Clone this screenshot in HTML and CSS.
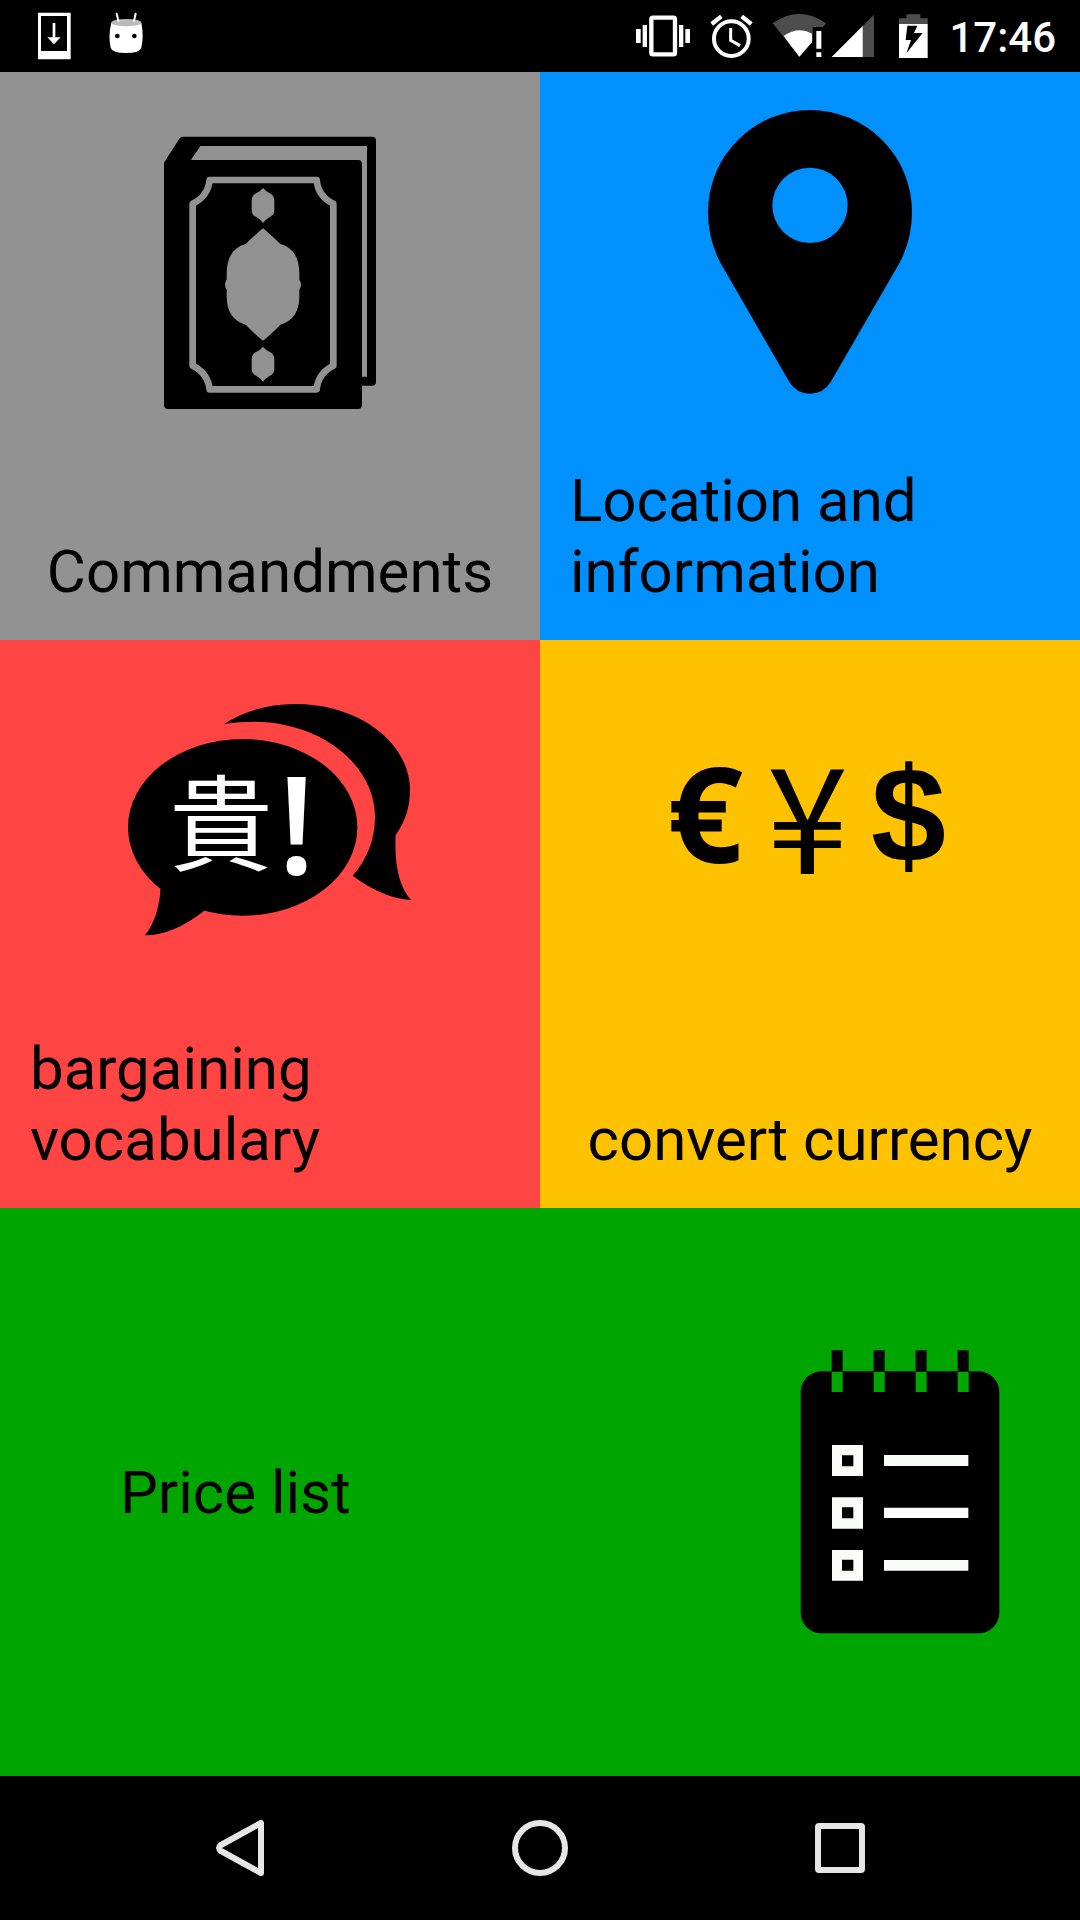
FILE: index.html
```html
<!DOCTYPE html>
<html lang="en">
<head>
    <meta charset="UTF-8">
    <meta name="viewport" content="width=device-width, initial-scale=1.0">
    <title>Main menu</title>
    <link rel="stylesheet" href="styles.css">
</head>
<body>
    <header class="status-bar">
        <div class="status-group">
            <!-- download -->
            <svg class="status-icon" viewBox="90 0 144 216">
                <path fill="#fff" fill-rule="evenodd" d="M114 38H212V178H114ZM123 48V153H201V48Z"/>
                <path fill="#fff" d="M158 69H166V112H182L162 133L142 112H158Z"/>
            </svg>
            <!-- android -->
            <svg class="status-icon" viewBox="306 0 144 216">
                <path fill="#fff" d="M334 68Q378 78 424 68Q432 110 424 143Q420 159 378 159Q337 159 332 143Q324 110 334 68Z"/>
                <ellipse cx="379" cy="68" rx="45" ry="11" fill="#bbb"/>
                <path stroke="#fff" stroke-width="6" stroke-linecap="round" d="M350 41L355 62M407 41L402 62"/>
                <circle cx="352" cy="108" r="7"/>
                <circle cx="403" cy="108" r="7"/>
            </svg>
        </div>
        <div class="status-group">
            <!-- vibrate -->
            <svg class="status-icon" viewBox="72 0 180 216">
                <rect x="124" y="53" width="71" height="110" rx="5" fill="none" stroke="#fff" stroke-width="13"/>
                <path fill="#fff" d="M78 87H92V129H78ZM98 75H111V141H98ZM207 75H220V141H207ZM226 87H240V129H226Z"/>
            </svg>
            <!-- alarm -->
            <svg class="status-icon" viewBox="294 0 144 216">
                <circle cx="364" cy="116" r="52" fill="none" stroke="#fff" stroke-width="12"/>
                <path fill="none" stroke="#fff" stroke-width="9" d="M362 84V121L390 137"/>
                <path fill="none" stroke="#fff" stroke-width="13" d="M305 72L334 49M424 72L395 49"/>
            </svg>
            <!-- wifi and signal -->
            <svg class="status-icon" viewBox="480 0 318 216">
                <path fill="#4d4d4d" d="M488 70Q568 14 648 70L639 81H608V122L568 170Z"/>
                <path fill="#fff" d="M521 108Q564 78 606 101V127L568 170Z"/>
                <path fill="#fff" d="M619 93H634V146H619ZM619 157H634V171H619Z"/>
                <path fill="#4d4d4d" d="M792 44V171H665Z"/>
                <path fill="#fff" d="M758 78V171H665Z"/>
            </svg>
            <!-- battery -->
            <svg class="status-icon" viewBox="840 0 135 216">
                <path fill="#4d4d4d" d="M889 43H931V55H953V73H867V55H889Z"/>
                <path fill="#fff" d="M867 72H953V174H867Z"/>
                <path d="M892 77H922L912 99H938L889 160L903 120H887Z"/>
            </svg>
            <span class="clock">17:46</span>
        </div>
    </header>

    <main class="menu">
        <button class="tile tile-commandments">
            <svg class="tile-icon" viewBox="-90 -84 960 960">
                <path fill-rule="evenodd" d="M72 128L118 56Q122 50 130 50H696Q708 50 708 62V785Q708 797 696 797H666V855Q666 867 654 867H84Q72 867 72 855ZM181 78L153 120H654Q666 120 666 132V770H681V78Z"/>
                <path class="cut-line" d="M209 180H530Q534 229 580 251V737Q534 760 530 808H209Q204 760 158 737V251Q204 229 209 180Z"/>
                <path class="cut" d="M369 204Q377 214 388 219Q403 226 403 242V271Q403 286 388 292Q377 299 369 309Q361 299 350 292Q335 286 335 271V242Q335 226 350 219Q361 214 369 204Z"/>
                <path class="cut" d="M369 325Q390 342 421 372Q478 387 478 462V479Q488 493 478 509V528Q478 598 421 614Q390 646 369 662Q348 646 317 614Q260 598 260 528V509Q250 493 260 479V462Q260 387 317 372Q348 342 369 325Z"/>
                <path class="cut" d="M369 680Q377 690 388 695Q403 702 403 718V747Q403 762 388 768Q377 775 369 785Q361 775 350 768Q335 762 335 747V718Q335 702 350 695Q361 690 369 680Z"/>
            </svg>
            <span class="tile-label">Commandments</span>
        </button>

        <button class="tile tile-location">
            <svg class="tile-icon" viewBox="-90 6 960 960">
                <path fill-rule="evenodd" d="M390 60A306 306 0 0 1 696 366Q696 448 658 520L452 876Q430 911 390 911Q350 911 328 876L122 520Q84 448 84 366A306 306 0 0 1 390 60ZM390 233A113 113 0 0 0 390 459A113 113 0 0 0 390 233Z"/>
            </svg>
            <span class="tile-label">Location and information</span>
        </button>

        <button class="tile tile-bargaining">
            <svg class="tile-icon" viewBox="0 -60 960 960">
                <ellipse cx="398" cy="442" rx="344" ry="265"/>
                <path d="M152 620Q148 710 105 766Q190 765 283 692Z"/>
                <path d="M342 132Q436 72 556 72C750 72 900 190 900 330Q900 405 857 465Q850 600 903 660Q820 655 728 587Q795 510 795 410C795 260 640 125 430 125Q385 125 342 132Z"/>
                <text class="bubble-word" x="333" y="550">貴</text>
                <text class="bubble-mark" x="560" y="582">!</text>
            </svg>
            <span class="tile-label">bargaining vocabulary</span>
        </button>

        <button class="tile tile-currency">
            <svg class="tile-icon" viewBox="30 -240 960 960">
                <text class="euro" x="195" y="370">€</text>
                <text class="yen" x="502" y="403">¥</text>
                <text class="dollar" x="805" y="366">$</text>
            </svg>
            <span class="tile-label">convert currency</span>
        </button>

        <button class="tile tile-prices">
            <span class="tile-label">Price list</span>
            <svg class="tile-icon" viewBox="-120 6 960 960">
                <rect x="62" y="124" width="596" height="786" rx="62"/>
                <path d="M155 61h33v62h-33zM281 61h33v62h-33zM407 61h33v62h-33zM533 61h33v62h-33z"/>
                <path class="cut" d="M155 126h33v60h-33zM281 126h33v60h-33zM407 126h33v60h-33zM533 126h33v60h-33z"/>
                <path fill="#fafcfa" fill-rule="evenodd" d="M156 345h93v93h-93zM186 376v33h34v-33zM156 502h93v94h-93zM186 532v33h34v-33zM156 660h93v92h-93zM186 689v33h34v-33z"/>
                <path fill="#fafcfa" d="M312 375h253v33H312zM312 533h253v31H312zM312 690h253v32H312z"/>
            </svg>
        </button>
    </main>

    <nav class="nav-bar">
        <button class="nav-button" aria-label="Back">
            <svg class="nav-icon" viewBox="0 0 72 72">
                <path d="M57 11V61L17 39Q13 36 17 33Z"/>
            </svg>
        </button>
        <button class="nav-button" aria-label="Home">
            <svg class="nav-icon" viewBox="0 0 72 72">
                <circle cx="36" cy="36" r="25"/>
            </svg>
        </button>
        <button class="nav-button" aria-label="Recent apps">
            <svg class="nav-icon" viewBox="0 0 72 72">
                <rect x="14" y="14" width="44" height="44" rx="1"/>
            </svg>
        </button>
    </nav>
</body>
</html>
```
FILE: styles.css
```css
* {
    margin: 0;
    padding: 0;
    box-sizing: border-box;
}

body {
    font-family: Roboto, "Liberation Sans", sans-serif;
    background: #000;
    min-height: 100vh;
    display: flex;
    flex-direction: column;
}

button {
    border: none;
    background: none;
    font: inherit;
    cursor: pointer;
}

/* Status bar */
.status-bar {
    display: flex;
    justify-content: space-between;
    height: 72px;
    padding: 0 24px 0 30px;
    color: #fff;
}

.status-group {
    display: flex;
    align-items: center;
    gap: 14px;
}

.status-group:first-child {
    gap: 24px;
}

.status-icon {
    height: 72px;
}

.clock {
    font-size: 42px;
    font-weight: 500;
    padding-top: 2px;
}

/* Menu */
.menu {
    flex: 1;
    display: grid;
    grid-template-columns: 1fr 1fr;
    grid-template-rows: repeat(3, 1fr);
}

.tile {
    --tile-color: #929292;
    display: flex;
    flex-direction: column;
    align-items: center;
    justify-content: space-between;
    padding: 20px 30px 33px;
    background: var(--tile-color);
    color: #000;
    text-align: left;
}

.tile-location {
    --tile-color: #0091ff;
}

.tile-bargaining {
    --tile-color: #ff4444;
}

.tile-currency {
    --tile-color: #ffc200;
}

.tile-prices {
    --tile-color: #00a500;
    grid-column: 1 / -1;
    flex-direction: row;
    padding: 20px 20px 20px 120px;
}

.tile-icon {
    width: 320px;
    height: 320px;
}

.tile-label {
    font-size: 60px;
    line-height: 71px;
}

.cut {
    fill: var(--tile-color);
}

.cut-line {
    fill: none;
    stroke: var(--tile-color);
    stroke-width: 20px;
    stroke-linejoin: round;
}

.tile-icon text {
    text-anchor: middle;
}

.bubble-word {
    font-family: "Noto Sans CJK TC", sans-serif;
    font-size: 312px;
    fill: #fff;
}

.bubble-mark {
    font-family: "Open Sans", sans-serif;
    font-size: 410px;
    font-weight: 600;
    fill: #fff;
}

.euro {
    font-family: "Open Sans", sans-serif;
    font-size: 400px;
    font-weight: 700;
}

.yen {
    font-family: "Noto Sans CJK JP", sans-serif;
    font-size: 440px;
}

.dollar {
    font-family: "Liberation Sans", sans-serif;
    font-size: 404px;
    font-weight: 700;
}

/* Navigation bar */
.nav-bar {
    display: flex;
    height: 144px;
    padding: 0 90px;
}

.nav-button {
    flex: 1;
    display: flex;
    align-items: center;
    justify-content: center;
}

.nav-icon {
    width: 72px;
    height: 72px;
    fill: none;
    stroke: #e6e6e6;
    stroke-width: 6px;
    stroke-linejoin: round;
}
```
